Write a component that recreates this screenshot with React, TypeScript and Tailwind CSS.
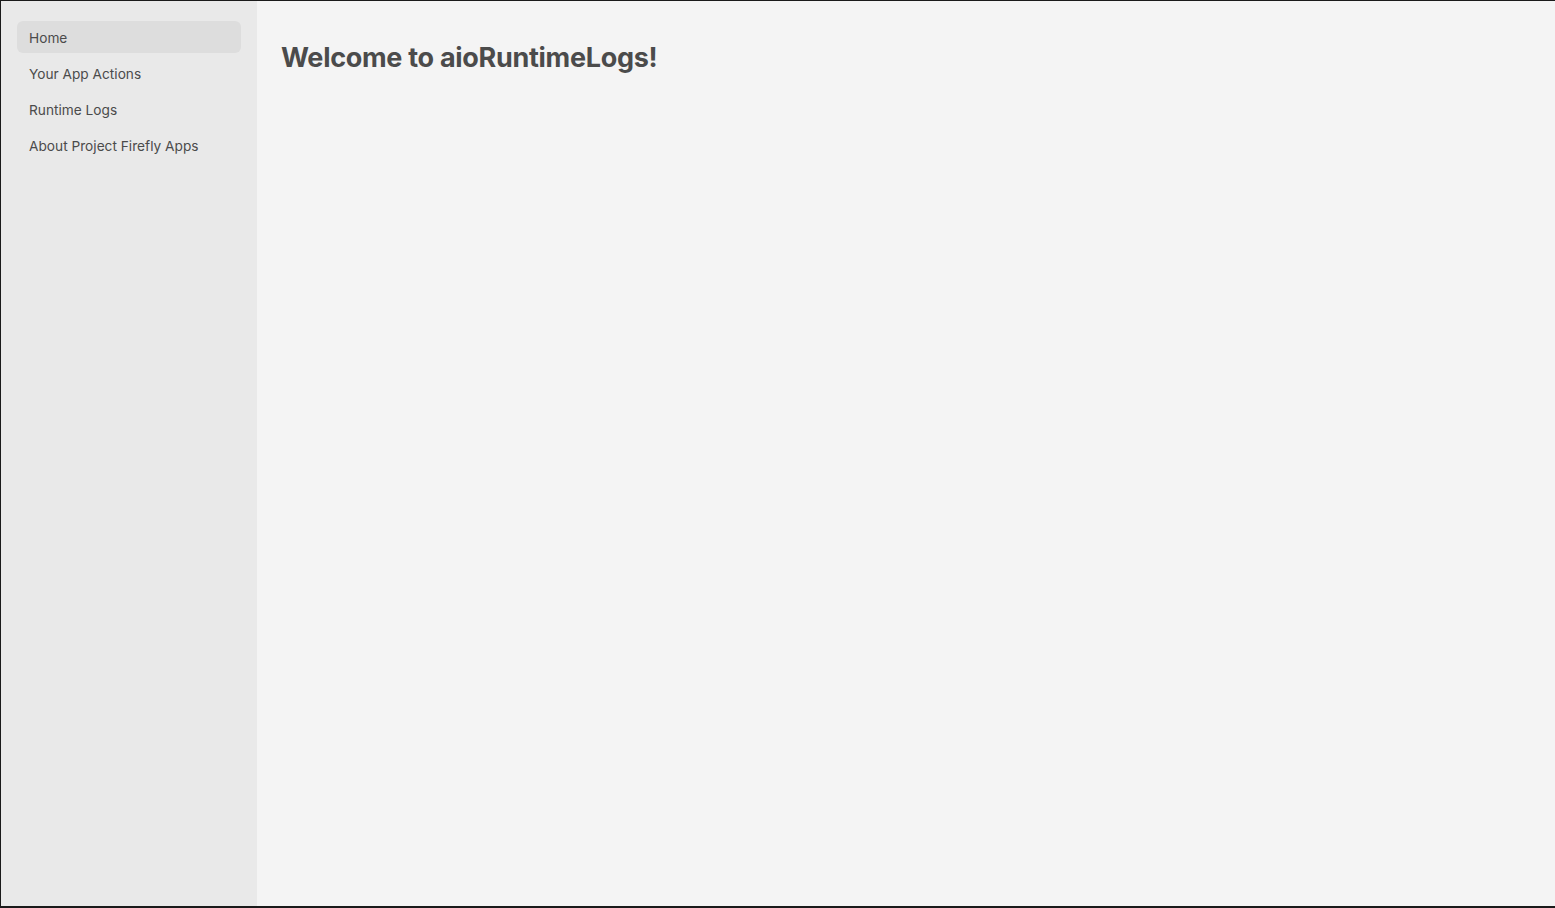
import React from 'react';

const navItems = ['Home', 'Your App Actions', 'Runtime Logs', 'About Project Firefly Apps'];

export default function App() {
  const active = 'Home';

  return (
    <div
      className="flex h-[908px] w-full overflow-hidden border-t border-l border-b-2 border-[#1a1a1a] bg-[#f4f4f4]"
      style={{ fontFamily: 'Inter, "Noto Sans", sans-serif' }}
    >
      <aside className="flex w-[256px] shrink-0 flex-col gap-1 bg-[#e9e9e9] px-4 pt-5">
        {navItems.map((item) => (
          <a
            key={item}
            className={`flex h-8 items-center rounded-md px-3 pt-[2px] text-[13.7px] text-[#4b4b4b] ${
              item === active ? 'bg-[#dddddd] text-[#2c2c2c]' : ''
            }`}
          >
            {item}
          </a>
        ))}
      </aside>
      <main className="flex-1 px-6 pt-10">
        <h1 className="text-[27px] font-bold leading-[34px] tracking-[-0.3px] text-[#4b4b4b]">
          Welcome to aioRuntimeLogs!
        </h1>
      </main>
    </div>
  );
}
